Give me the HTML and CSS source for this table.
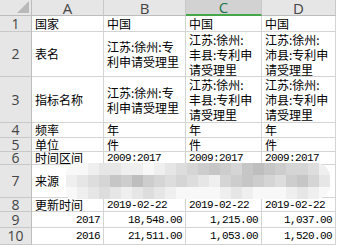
FILE: index.html
```html
<!DOCTYPE html>
<html>
<head>
<meta charset="utf-8">
<link rel="stylesheet" href="styles.css">
</head>
<body>
<div class="sheet">
  <div class="corner"><svg class="tri" width="12" height="12" viewBox="0 0 12 12"><polygon points="12,0 12,12 0,12" fill="#b9b9b9"/></svg></div>
  <div class="ch">A</div>
  <div class="ch">B</div>
  <div class="ch sel">C</div>
  <div class="ch">D</div>

  <div class="rh">1</div>
  <div class="c">国家</div>
  <div class="c">中国</div>
  <div class="c">中国</div>
  <div class="c">中国</div>

  <div class="rh">2</div>
  <div class="c">表名</div>
  <div class="c ml">江苏:徐州:专<br>利申请受理里</div>
  <div class="c ml">江苏:徐州:<br>丰县:专利申<br>请受理里</div>
  <div class="c ml">江苏:徐州:<br>沛县:专利申<br>请受理里</div>

  <div class="rh">3</div>
  <div class="c">指标名称</div>
  <div class="c ml">江苏:徐州:专<br>利申请受理里</div>
  <div class="c ml">江苏:徐州:<br>丰县:专利申<br>请受理里</div>
  <div class="c ml">江苏:徐州:<br>沛县:专利申<br>请受理里</div>

  <div class="rh">4</div>
  <div class="c">频率</div>
  <div class="c">年</div>
  <div class="c">年</div>
  <div class="c">年</div>

  <div class="rh">5</div>
  <div class="c">单位</div>
  <div class="c">件</div>
  <div class="c">件</div>
  <div class="c">件</div>

  <div class="rh">6</div>
  <div class="c">时间区间</div>
  <div class="c num">2009:2017</div>
  <div class="c num">2009:2017</div>
  <div class="c num">2009:2017</div>

  <div class="rh">7</div>
  <div class="c">来源</div>
  <div class="c"></div>
  <div class="c"></div>
  <div class="c"></div>

  <div class="rh">8</div>
  <div class="c">更新时间</div>
  <div class="c num">2019-02-22</div>
  <div class="c num">2019-02-22</div>
  <div class="c num">2019-02-22</div>

  <div class="rh">9</div>
  <div class="c num r">2017</div>
  <div class="c num r">18,548.00</div>
  <div class="c num r">1,215.00</div>
  <div class="c num r">1,037.00</div>

  <div class="rh">10</div>
  <div class="c num r">2016</div>
  <div class="c num r">21,511.00</div>
  <div class="c num r">1,053.00</div>
  <div class="c num r">1,520.00</div>

  <div class="mosaic">
    <i class="g0"></i><i class="g0"></i><i class="g1"></i><i class="g2"></i><i class="g2"></i><i class="g1"></i><i class="g1"></i><i class="g0"></i><i class="g1"></i><i class="g2"></i><i class="g3"></i><i class="g4"></i><i class="g5"></i><i class="g6"></i><i class="g5"></i><i class="g4"></i><i class="g6"></i><i class="g7"></i><i class="g6"></i><i class="g5"></i><i class="g4"></i><i class="g4"></i><i class="g3"></i><i class="g1"></i>
    <i class="g1"></i><i class="g2"></i><i class="g3"></i><i class="g4"></i><i class="g6"></i><i class="g5"></i><i class="g7"></i><i class="g5"></i><i class="g4"></i><i class="g3"></i><i class="g4"></i><i class="g3"></i><i class="g2"></i><i class="g1"></i><i class="g4"></i><i class="g5"></i><i class="g6"></i><i class="g5"></i><i class="g4"></i><i class="g3"></i><i class="g5"></i><i class="g6"></i><i class="g4"></i><i class="g2"></i>
    <i class="g0"></i><i class="g1"></i><i class="g2"></i><i class="g3"></i><i class="g2"></i><i class="g1"></i><i class="g2"></i><i class="g3"></i><i class="g2"></i><i class="g1"></i><i class="g0"></i><i class="g0"></i><i class="g0"></i><i class="g0"></i><i class="g1"></i><i class="g2"></i><i class="g1"></i><i class="g0"></i><i class="g0"></i><i class="g0"></i><i class="g1"></i><i class="g2"></i><i class="g1"></i><i class="g0"></i>
  </div>
</div>
</body>
</html>
```

FILE: styles.css
```css
html, body {
  margin: 0;
  padding: 0;
  background: #ffffff;
}

.sheet {
  position: relative;
  display: grid;
  grid-template-columns: 32px 72px 82px 76px 74px;
  grid-template-rows: 16px 16px 45px 46px 15px 14px 13px 33px 14px 16px 17px;
  width: 336px;
  font-family: "Noto Sans CJK SC", "Noto Sans", sans-serif;
  font-size: 12px;
  color: #000;
}

.sheet > div {
  box-sizing: border-box;
}

.corner {
  background: #e6e6e6;
  border-right: 1px solid #bdbdbd;
  border-bottom: 1px solid #bdbdbd;
  display: flex;
  align-items: flex-end;
  justify-content: flex-end;
  padding: 0 2px 2px 0;
}

.tri {
  display: block;
}

.ch {
  background: #e6e6e6;
  border-right: 1px solid #c8c8c8;
  border-bottom: 1px solid #bdbdbd;
  display: flex;
  align-items: center;
  justify-content: center;
  font-family: "Open Sans", "Liberation Sans", sans-serif;
  font-size: 15px;
  color: #444;
  line-height: 14px;
}

.ch.sel {
  background: #d2d2d2;
  color: #217346;
  border-bottom: 2px solid #46a64a;
}

.rh {
  background: #e6e6e6;
  border-right: 1px solid #bdbdbd;
  border-bottom: 1px solid #c8c8c8;
  display: flex;
  align-items: center;
  justify-content: center;
  font-family: "Open Sans", "Liberation Sans", sans-serif;
  font-size: 14px;
  color: #444;
  line-height: 12px;
}

.c {
  border-right: 1px solid #d4d4d4;
  border-bottom: 1px solid #d4d4d4;
  padding: 0 2px 0 3px;
  display: flex;
  align-items: center;
  line-height: 12px;
  white-space: nowrap;
  overflow: hidden;
}

.c.ml {
  line-height: 15px;
}

.num {
  font-family: "Liberation Mono", "DejaVu Sans Mono", monospace;
  font-size: 11px;
  letter-spacing: -0.6px;
}

.r {
  justify-content: flex-end;
  padding-right: 3px;
}

.mosaic {
  position: absolute;
  left: 66px;
  top: 163px;
  width: 264px;
  height: 36px;
  display: grid;
  grid-template-columns: repeat(24, 11px);
  grid-template-rows: repeat(3, 12px);
  border-radius: 10px 14px 14px 6px;
  overflow: hidden;
}

.mosaic i { display: block; }
.g0 { background: #f8f8f8; }
.g1 { background: #efefef; }
.g2 { background: #e6e6e6; }
.g3 { background: #dddddd; }
.g4 { background: #d5d5d5; }
.g5 { background: #cdcdcd; }
.g6 { background: #c6c6c6; }
.g7 { background: #bebebe; }
```
